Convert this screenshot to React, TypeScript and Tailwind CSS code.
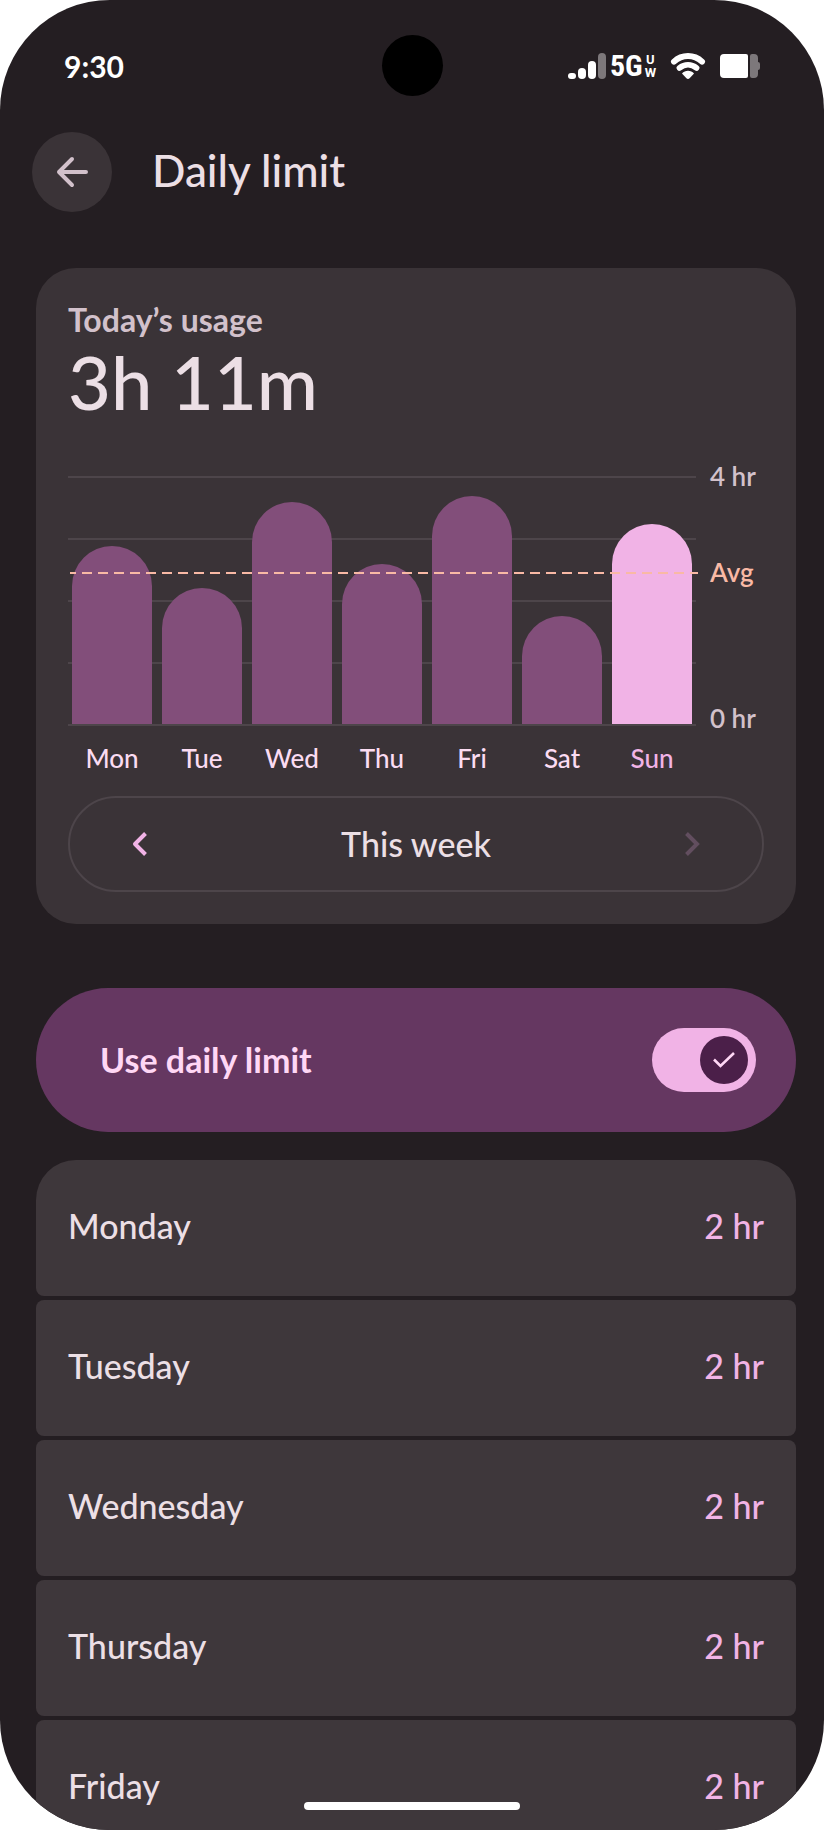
import { useState } from 'react';

// Usage per day; height is in px on the 248px tall plot
const USAGE = [
  { day: 'Mon', height: 178 },
  { day: 'Tue', height: 136 },
  { day: 'Wed', height: 222 },
  { day: 'Thu', height: 160 },
  { day: 'Fri', height: 228 },
  { day: 'Sat', height: 108 },
  { day: 'Sun', height: 200, today: true },
];

const LIMITS = [
  { day: 'Monday', limit: '2 hr' },
  { day: 'Tuesday', limit: '2 hr' },
  { day: 'Wednesday', limit: '2 hr' },
  { day: 'Thursday', limit: '2 hr' },
  { day: 'Friday', limit: '2 hr' },
];

function StatusBar() {
  return (
    <div className="grid grid-cols-3 items-center pt-[35px] px-16 text-white">
      <span className="text-[30px] leading-8 font-bold">9:30</span>
      <span className="size-[61px] rounded-full bg-black justify-self-center" />
      <div className="flex items-center justify-end">
        <svg width="38" height="26" viewBox="0 0 38 26" fill="currentColor" aria-hidden="true">
          <rect x="0" y="20" width="8" height="6" rx="3" />
          <rect x="10" y="15" width="8" height="11" rx="4" />
          <rect x="20" y="8" width="8" height="18" rx="4" />
          <rect x="30" y="0" width="8" height="26" rx="4" fill="#7d787b" />
        </svg>
        <span className="ml-1 font-['Liberation_Sans_Narrow','Roboto_Condensed','Roboto',sans-serif] text-[30px] leading-8 font-bold">
          5G
        </span>
        <span className="ml-[2px] flex flex-col items-center font-['Roboto',sans-serif] text-[13px] leading-[13px] font-bold">
          <span>U</span>
          <span>W</span>
        </span>
        <svg className="ml-[14px]" width="36" height="26" viewBox="0 0 36 26" fill="none" stroke="currentColor" strokeLinecap="round" aria-hidden="true">
          <path d="M4 8.6C12 1.2 24 1.2 32 8.6" strokeWidth="6" />
          <path d="M9.4 15C14.6 10.8 21.4 10.8 26.6 15" strokeWidth="5.6" />
          <path d="M12 20.4C15 16.8 21 16.8 24 20.4L19.8 25Q18 26.8 16.2 25Z" fill="currentColor" stroke="none" />
        </svg>
        <svg className="ml-[14px]" width="40" height="24" viewBox="0 0 40 24" fill="currentColor" aria-hidden="true">
          <path d="M4 0H26Q28 0 28 2V22Q28 24 26 24H4Q0 24 0 20V4Q0 0 4 0Z" />
          <path d="M32 0H34Q38 0 38 4V8Q40 8 40 10V14Q40 16 38 16V20Q38 24 34 24H32Q30 24 30 22V2Q30 0 32 0Z" fill="#7d787b" />
        </svg>
      </div>
    </div>
  );
}

function UsageChart() {
  return (
    <div className="mt-[54px] grid grid-cols-[1fr_54px] gap-x-[14px]">
      <div className="relative grid">
        <div className="col-start-1 row-start-1 flex flex-col justify-between">
          {Array.from({ length: 5 }).map((_, i) => (
            <div key={i} className="h-[2px] bg-[#4d454a]" />
          ))}
        </div>
        <div className="relative col-start-1 row-start-1 h-[250px] flex items-end gap-[10px] px-1 pb-[2px]">
          {USAGE.map((item) => (
            <div
              key={item.day}
              className={`flex-1 rounded-t-[40px] ${item.today ? 'bg-[#f1b3e6]' : 'bg-[#824e7a]'}`}
              style={{ height: item.height }}
            />
          ))}
        </div>
        <svg className="absolute top-24 left-[2px] w-full h-[2px]" aria-hidden="true">
          <line x1="0" y1="1" x2="100%" y2="1" stroke="#f9b9a5" strokeWidth="2" strokeDasharray="10 6" strokeDashoffset="4" />
        </svg>
      </div>
      <div className="relative -mt-4 -mb-2 flex flex-col justify-between text-[26px] leading-8 font-semibold text-[#d2c1cb] whitespace-nowrap">
        <span>4 hr</span>
        <span className="absolute top-24 text-[#f9b9a5]">Avg</span>
        <span>0 hr</span>
      </div>
      <div className="mt-4 flex gap-[10px] px-1 text-[26px] leading-8 font-medium text-[#fbdcf2]">
        {USAGE.map((item) => (
          <span key={item.day} className={`flex-1 text-center ${item.today ? 'text-[#f1b3e6]' : ''}`}>
            {item.day}
          </span>
        ))}
      </div>
    </div>
  );
}

function WeekPicker() {
  return (
    <div className="mt-[22px] flex h-24 items-center justify-between rounded-full border-2 border-[#4d454a] px-[46px]">
      <button type="button" aria-label="Previous week" className="flex size-12 items-center justify-center text-[#f1b3e6]">
        <svg width="16" height="24" viewBox="0 0 16 24" fill="none" stroke="currentColor" strokeWidth="4" strokeLinejoin="round" aria-hidden="true">
          <path d="M13.5 1.5L3 12L13.5 22.5" />
        </svg>
      </button>
      <span className="text-[34px] leading-10 font-medium text-[#ecdfe5]">This week</span>
      <button type="button" aria-label="Next week" disabled className="flex size-12 items-center justify-center text-[#624e5f]">
        <svg width="16" height="24" viewBox="0 0 16 24" fill="none" stroke="currentColor" strokeWidth="4" aria-hidden="true">
          <path d="M2.5 1.5L13 12L2.5 22.5" />
        </svg>
      </button>
    </div>
  );
}

function LimitSwitch() {
  const [enabled, setEnabled] = useState(true);

  return (
    <label className="mt-16 flex h-36 cursor-pointer items-center justify-between rounded-full bg-[#653761] pl-16 pr-10">
      <span className="text-[34px] leading-10 font-bold text-[#ffd7f5]">Use daily limit</span>
      <span className={`relative flex h-16 w-[104px] items-center rounded-full px-2 ${enabled ? 'justify-end bg-[#f1b3e6]' : 'justify-start bg-[#4d454a]'}`}>
        <input
          type="checkbox"
          role="switch"
          checked={enabled}
          onChange={(e) => setEnabled(e.target.checked)}
          className="absolute inset-0 size-full cursor-pointer appearance-none rounded-full"
        />
        <span className="flex size-12 items-center justify-center rounded-full bg-[#4b1f49]">
          {enabled && (
            <svg width="22" height="16" viewBox="0 0 22 16" fill="none" stroke="#ffd7f5" strokeWidth="2.6" aria-hidden="true">
              <path d="M1 7.5L7.5 14L21 1" />
            </svg>
          )}
        </span>
      </span>
    </label>
  );
}

export default function App() {
  return (
    <div className="bg-white">
      <main className="relative h-screen overflow-hidden rounded-[110px] bg-[#241e22] font-['Lato',sans-serif]">
        <StatusBar />

        <header className="mt-9 flex items-center gap-10 px-8">
          <button type="button" aria-label="Back" className="flex size-20 items-center justify-center rounded-full bg-[#3a3337] text-[#d2c1cb]">
            <svg width="32" height="32" viewBox="0 0 32 32" fill="none" stroke="currentColor" strokeWidth="4" strokeLinecap="round" strokeLinejoin="round" aria-hidden="true">
              <path d="M16 3L3 16L16 29M3 16H30" />
            </svg>
          </button>
          <h1 className="pb-1 text-[44px] leading-[52px] font-medium text-[#ecdfe5]">Daily limit</h1>
        </header>

        <div className="pl-9 pr-7">
          <section className="mt-14 rounded-[40px] bg-[#3a3337] p-8">
            <h2 className="mt-1 text-[32px] leading-8 font-bold text-[#d2c1cb]">Today’s usage</h2>
            <p className="mt-[6px] text-[74px] leading-[80px] font-medium text-[#ecdfe5]">3h 11m</p>
            <UsageChart />
            <WeekPicker />
          </section>

          <LimitSwitch />

          <ul className="mt-7 flex flex-col gap-1">
            {LIMITS.map((item) => (
              <li key={item.day}>
                <button
                  type="button"
                  className={`flex h-[136px] w-full items-center justify-between px-8 pb-1 text-[34px] leading-10 font-medium bg-[#3e373b] ${item.day === 'Monday' ? 'rounded-t-[40px] rounded-b-lg' : 'rounded-lg'}`}
                >
                  <span className="text-[#ecdfe5]">{item.day}</span>
                  <span className="text-[#f1b3e6]">{item.limit}</span>
                </button>
              </li>
            ))}
          </ul>
        </div>

        <div className="absolute bottom-5 left-1/2 h-2 w-[216px] -translate-x-1/2 rounded-full bg-white" />
      </main>
    </div>
  );
}
